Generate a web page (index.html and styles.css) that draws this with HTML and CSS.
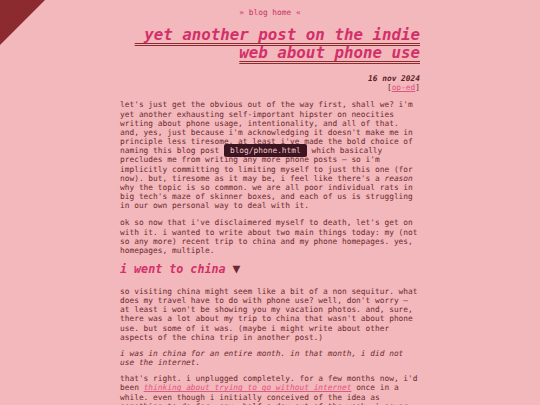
FILE: index.html
```html
<!DOCTYPE html>
<html>
<head>
<meta charset="utf-8">
<link rel="stylesheet" href="styles.css">
</head>
<body>
<div class="corner"></div>
<main class="page">
  <nav class="top"><a href="#">» blog home «</a></nav>
  <h1 class="title">&nbsp;yet another post on the indie web about phone use</h1>
  <div class="meta">
    <div class="date">16 nov 2024</div>
    <div class="tags">[<a href="#">op-ed</a>]</div>
  </div>
  <p class="first">let's just get the obvious out of the way first, shall we? i'm yet another exhausting self-important hipster on neocities writing about phone usage, intentionality, and all of that. and, yes, just because i'm acknowledging it doesn't make me in principle less tiresome, at least i've made the bold choice of naming this blog post <span class="tip">blog/phone.html</span> which basically precludes me from writing any more phone posts — so i'm implicitly committing to limiting myself to just this one (for now). but, tiresome as it may be, i feel like there's a <em>reason</em> why the topic is so common. we are all poor individual rats in big tech's maze of skinner boxes, and each of us is struggling in our own personal way to deal with it.</p>
  <p>ok so now that i've disclaimered myself to death, let's get on with it. i wanted to write about two main things today: my (not so any more) recent trip to china and my phone homepages. yes, homepages, multiple.</p>
  <h2 class="section">i went to china <span class="arrow">▼</span></h2>
  <p>so visiting china might seem like a bit of a non sequitur. what does my travel have to do with phone use? well, don't worry — at least i won't be showing you my vacation photos. and, sure, there was a lot about my trip to china that wasn't about phone use. but some of it was. (maybe i might write about other aspects of the china trip in another post.)</p>
  <p class="quote">i was in china for an entire month. in that month, i did not use the internet.</p>
  <p class="after">that's right. i unplugged completely. for a few months now, i'd been <a class="inline" href="#">thinking about trying to go without internet</a> once in a while. even though i initially conceived of the idea as something to do for, say, half a day out of the week, i never really got around to it.</p>
</main>
</body>
</html>
```
FILE: styles.css
```css
html, body {
  margin: 0;
  padding: 0;
  background: #f2b8bb;
}
body {
  font-family: "DejaVu Sans Mono", monospace;
  font-size: 7.85px;
  line-height: 9.15px;
  color: #6e2a31;
  overflow: hidden;
  height: 405px;
}
.corner {
  position: absolute;
  left: 0;
  top: 0;
  width: 45px;
  height: 45px;
  background: #8b2b2f;
  clip-path: polygon(0 0, 100% 0, 0 100%);
}
.page {
  width: 300px;
  margin: 0 auto;
}
.top {
  text-align: center;
  padding-top: 8px;
}
.top a {
  color: #c8346a;
  text-decoration: none;
}
.title {
  margin: 9px 0 0;
  text-align: right;
  font-size: 15.8px;
  line-height: 18px;
  font-weight: bold;
  font-style: italic;
  color: #d2306a;
  text-decoration: underline double #8b2b2f;
  text-decoration-thickness: 1.4px;
  text-underline-offset: 3px;
}
.meta {
  text-align: right;
  margin-top: 12px;
}
.date {
  font-weight: bold;
  font-style: italic;
  color: #5a1f26;
}
.tags a {
  color: #e0557f;
}
p {
  margin: 8px 0 0;
}
p.first {
  margin-top: 8px;
}
.tip {
  background: #3b1620;
  color: #f3c3cb;
  padding: 2px 6px;
  border-radius: 2px;
}
.section {
  margin: 6px 0 10px;
  font-size: 11.7px;
  line-height: 16px;
  font-weight: bold;
  font-style: italic;
  color: #d2306a;
}
.section + p {
  margin-top: 10px;
}
.arrow {
  font-style: normal;
  color: #6e2a31;
  font-size: 13px;
}
p.quote {
  font-style: italic;
  margin-top: 7px;
}
p.after {
  margin-top: 7px;
}
.inline {
  color: #e0557f;
  font-style: italic;
}
```
